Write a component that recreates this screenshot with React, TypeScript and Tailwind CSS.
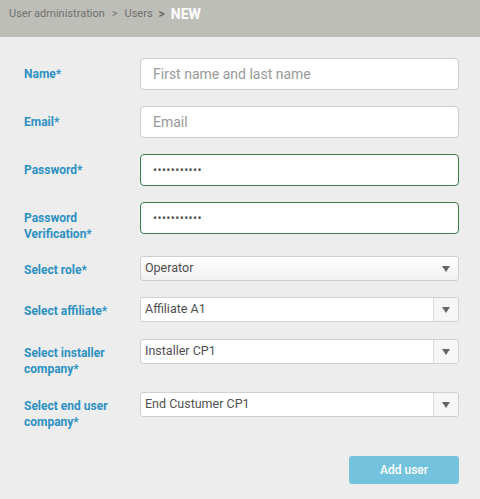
import React from 'react';

const labelCls = "w-[116px] shrink-0 text-[12px] leading-[16px] font-bold text-[#2c90c2]";

const TextRow = ({ label, placeholder, value, green, mt }: { label: string; placeholder?: string; value?: string; green?: boolean; mt: string }) => (
  <div className={`flex items-start h-[32px] ${mt}`}>
    <div className={`${labelCls} pt-[8px]`}>{label}</div>
    <div
      className={`h-[32px] w-[319px] rounded-[4px] bg-white flex items-center px-[12px] border ${
        green ? 'border-[#3d7f49]' : 'border-[#cdcdcd]'
      }`}
    >
      {value ? (
        <span className="text-[#555] text-[12px] tracking-[0.4px]">{value}</span>
      ) : (
        <span className="text-[#9a9a9a] text-[14px]">{placeholder}</span>
      )}
    </div>
  </div>
);

const Arrow = () => (
  <svg width="8" height="6" viewBox="0 0 8 6">
    <path d="M0 0 H8 L4 6 Z" fill="#666" />
  </svg>
);

const SelectRow = ({ label, value, split, mt }: { label: React.ReactNode; value: string; split?: boolean; mt: string }) => (
  <div className={`flex items-start h-[25px] ${mt}`}>
    <div className={`${labelCls} pt-[6px]`}>{label}</div>
    <div
      className={`h-[25px] w-[319px] rounded-[3px] border border-[#d0d0d0] flex items-stretch ${
        split ? 'bg-white' : 'bg-gradient-to-b from-white to-[#f0f0f0]'
      }`}
    >
      <div className="flex-1 flex items-center pl-[4px] text-[12.5px] text-[#505050]">{value}</div>
      <div className={`w-[25px] flex items-center justify-center ${split ? 'border-l border-[#dcdcdc] bg-[#f6f6f6] rounded-r-[3px]' : ''}`}>
        <Arrow />
      </div>
    </div>
  </div>
);

export default function App() {
  return (
    <div className="w-[480px] h-[499px] bg-[#ededed] font-['Roboto',_'Liberation_Sans',_sans-serif] overflow-hidden">
      <div className="h-[37px] bg-[#bebeb8] flex items-center pl-[9px] pb-[9px] text-[11px] text-[#707070]">
        <span>User administration</span>
        <span className="mx-[7px]">&gt;</span>
        <span>Users</span>
        <span className="mx-[6px] text-[12px] font-bold text-[#6a6a6a]">&gt;</span>
        <span className="text-[14px] font-bold text-white">NEW</span>
      </div>
      <div className="pl-[24px]">
        <TextRow mt="mt-[21px]" label="Name*" placeholder="First name and last name" />
        <TextRow mt="mt-[16px]" label="Email*" placeholder="Email" />
        <TextRow mt="mt-[16px]" label="Password*" value="•••••••••••" green />
        <TextRow mt="mt-[16px]" label="Password Verification*" value="•••••••••••" green />
        <SelectRow mt="mt-[22px]" label="Select role*" value="Operator" />
        <SelectRow mt="mt-[16px]" label="Select affiliate*" value="Affiliate A1" split />
        <SelectRow mt="mt-[17px]" label={<>Select installer<br />company*</>} value="Installer CP1" split />
        <SelectRow mt="mt-[28px]" label={<>Select end user<br />company*</>} value="End Custumer CP1" split />
        <div className="flex justify-end pr-[21px] mt-[39px]">
          <button className="w-[110px] h-[28px] rounded-[3px] bg-[#73c2de] text-white text-[12px] font-medium">
            Add user
          </button>
        </div>
      </div>
    </div>
  );
}
